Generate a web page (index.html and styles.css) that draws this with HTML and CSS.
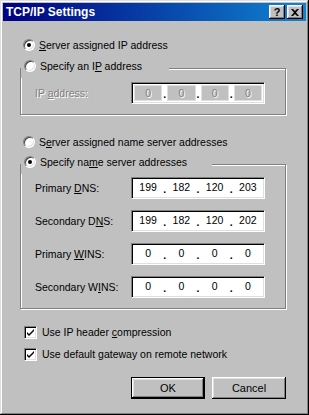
FILE: index.html
```html
<!DOCTYPE html>
<html>
<head>
  <title>TCP/IP Settings</title>
  <link rel="stylesheet" href="styles.css">
</head>
<body>
  <div class="window">
    <div class="titlebar">
      <span class="title">TCP/IP Settings</span>
      <div class="tb-buttons">
        <span class="tb-btn help">?</span>
        <span class="tb-btn">
          <svg width="8" height="7" viewBox="0 0 8 7"><path d="M0 0h2l2 2 2-2h2L5 3.5 8 7H6L4 5 2 7H0l3-3.5z" fill="#000"/></svg>
        </span>
      </div>
    </div>

    <div class="content">
      <div class="opt"><span class="radio checked"></span><span><u>S</u>erver assigned IP address</span></div>

      <fieldset class="group first">
        <legend><div class="opt"><span class="radio"></span><span>Specify an I<u>P</u> address</span></div></legend>
        <div class="row">
          <span class="lbl off">IP <u>a</u>ddress:</span>
          <div class="ip off">
            <span class="oct">0</span><span class="dot">.</span>
            <span class="oct">0</span><span class="dot">.</span>
            <span class="oct">0</span><span class="dot">.</span>
            <span class="oct">0</span>
          </div>
        </div>
      </fieldset>

      <div class="opt gap-big"><span class="radio"></span><span>S<u>e</u>rver assigned name server addresses</span></div>

      <fieldset class="group second">
        <legend><div class="opt"><span class="radio checked"></span><span>Specify na<u>m</u>e server addresses</span></div></legend>
        <div class="row">
          <span class="lbl">Primary <u>D</u>NS:</span>
          <div class="ip">
            <span class="oct">199</span><span class="dot">.</span>
            <span class="oct">182</span><span class="dot">.</span>
            <span class="oct">120</span><span class="dot">.</span>
            <span class="oct">203</span>
          </div>
        </div>
        <div class="row">
          <span class="lbl">Secondary D<u>N</u>S:</span>
          <div class="ip">
            <span class="oct">199</span><span class="dot">.</span>
            <span class="oct">182</span><span class="dot">.</span>
            <span class="oct">120</span><span class="dot">.</span>
            <span class="oct">202</span>
          </div>
        </div>
        <div class="row">
          <span class="lbl">Primary <u>W</u>INS:</span>
          <div class="ip">
            <span class="oct">0</span><span class="dot">.</span>
            <span class="oct">0</span><span class="dot">.</span>
            <span class="oct">0</span><span class="dot">.</span>
            <span class="oct">0</span>
          </div>
        </div>
        <div class="row">
          <span class="lbl">Secondary W<u>I</u>NS:</span>
          <div class="ip">
            <span class="oct">0</span><span class="dot">.</span>
            <span class="oct">0</span><span class="dot">.</span>
            <span class="oct">0</span><span class="dot">.</span>
            <span class="oct">0</span>
          </div>
        </div>
      </fieldset>

      <div class="check first-check">
        <span class="box"><svg width="9" height="9" viewBox="0 0 9 9"><path d="M1 4l2 2 5-5v2L3 8 1 6z" fill="#000"/></svg></span>
        <span>Use IP header <u>c</u>ompression</span>
      </div>
      <div class="check">
        <span class="box"><svg width="9" height="9" viewBox="0 0 9 9"><path d="M1 4l2 2 5-5v2L3 8 1 6z" fill="#000"/></svg></span>
        <span>Use default <u>g</u>ateway on remote network</span>
      </div>

      <div class="buttons">
        <button class="btn default">OK</button>
        <button class="btn">Cancel</button>
      </div>
    </div>
  </div>
</body>
</html>
```

FILE: styles.css
```css
* {
  box-sizing: border-box;
}
body {
  margin: 0;
  background: #c0c0c0;
  font-family: "Liberation Sans", Arial, sans-serif;
  font-size: 10.5px;
  color: #000;
}
.window {
  width: 309px;
  height: 415px;
  padding: 3px;
  background: #c0c0c0;
  box-shadow: inset -1px -1px #000, inset 1px 1px #dfdfdf, inset -2px -2px #808080, inset 2px 2px #fff;
  display: flex;
  flex-direction: column;
}
.titlebar {
  height: 18px;
  display: flex;
  align-items: center;
  justify-content: space-between;
  padding: 0 3px 0 3px;
  background: linear-gradient(90deg, #000080, #1084d0);
}
.title {
  color: #fff;
  font-weight: bold;
  font-size: 12px;
}
.tb-buttons {
  display: flex;
  gap: 2px;
}
.tb-btn {
  width: 16px;
  height: 14px;
  display: flex;
  align-items: center;
  justify-content: center;
  background: #c0c0c0;
  box-shadow: inset -1px -1px #000, inset 1px 1px #fff, inset -2px -2px #808080, inset 2px 2px #dfdfdf;
}
.tb-btn.help {
  font-weight: bold;
  font-size: 11px;
  line-height: 14px;
}
.content {
  flex: 1;
  padding: 16px 20px 0 17px;
}
.opt {
  display: flex;
  align-items: center;
  gap: 4px;
  height: 16px;
  padding-left: 3px;
}
.opt.gap-big {
  margin-top: 19px;
}
.radio {
  width: 12px;
  height: 12px;
  border-radius: 50%;
  background: #fff;
  border: 1px solid;
  border-color: #808080 #fff #fff #808080;
  box-shadow: inset 1px 1px #404040, inset -1px -1px #dfdfdf;
  display: flex;
  align-items: center;
  justify-content: center;
}
.radio.checked::after {
  content: "";
  width: 4px;
  height: 4px;
  border-radius: 50%;
  background: #000;
}
.group {
  margin: 5px 0 0 0;
  min-width: 0;
  border: 1px solid #808080;
  box-shadow: inset 1px 1px #fff, 1px 1px #fff;
  padding: 4px 20px 10px 14px;
}
.group.second {
  margin-top: 4px;
  padding-top: 3px;
}
.group legend {
  margin-left: -14px;
  padding: 0 27px 4px 0;
  background: #c0c0c0;
}
.group.second legend {
  padding-right: 25px;
}
.row {
  display: flex;
  align-items: center;
  height: 22px;
}
.group.second .row + .row {
  margin-top: 11px;
}
.lbl {
  width: 96px;
}
.off {
  color: #808080;
  text-shadow: 1px 1px #fff;
}
.ip {
  width: 134px;
  height: 22px;
  display: flex;
  align-items: center;
  padding: 0 2px;
  background: #fff;
  border: 1px solid;
  border-color: #808080 #fff #fff #808080;
  box-shadow: inset 1px 1px #000, inset -1px -1px #dfdfdf;
}
.oct {
  flex: 1;
  text-align: center;
  margin-top: -3px;
}
.dot {
  width: 5px;
  text-align: center;
  font-weight: bold;
  margin-top: 2px;
}
.ip.off .oct {
  background: #c0c0c0;
  height: 16px;
  line-height: 16px;
  margin-top: 0;
  box-shadow: inset 1px 1px #dfdfdf, inset -1px -1px #dfdfdf;
}
.ip.off .dot {
  color: #000;
  text-shadow: none;
}
.check {
  display: flex;
  align-items: center;
  gap: 5px;
  height: 16px;
  padding-left: 4px;
  margin-top: 6px;
}
.check.first-check {
  margin-top: 15px;
}
.box {
  width: 13px;
  height: 13px;
  display: flex;
  align-items: center;
  justify-content: center;
  background: #fff;
  border: 1px solid;
  border-color: #808080 #fff #fff #808080;
  box-shadow: inset 1px 1px #000, inset -1px -1px #dfdfdf;
}
.buttons {
  display: flex;
  justify-content: flex-end;
  gap: 7px;
  margin-top: 15px;
}
.btn {
  width: 74px;
  height: 22px;
  padding: 0;
  font-family: inherit;
  font-size: 11px;
  color: #000;
  background: #c0c0c0;
  border: none;
  box-shadow: inset -1px -1px #000, inset 1px 1px #fff, inset -2px -2px #808080, inset 2px 2px #dfdfdf;
}
.btn.default {
  border: 1px solid #000;
  box-shadow: inset -1px -1px #000, inset 1px 1px #fff, inset -2px -2px #808080, inset 2px 2px #dfdfdf;
}
```
